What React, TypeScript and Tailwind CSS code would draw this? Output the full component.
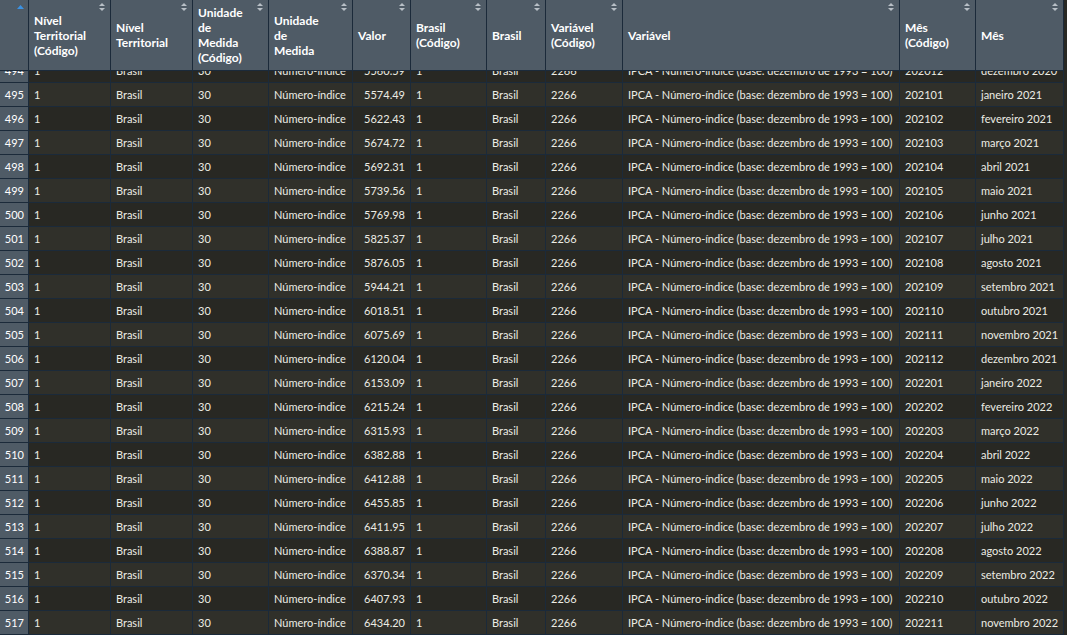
import React from "react"

// Column widths include the 1px right border
const cols =
  "grid grid-cols-[29px_82px_82px_76px_84px_58px_76px_59px_77px_277px_76px_88px]"

const headers: { lines: string[] }[] = [
  { lines: ["Nível", "Territorial", "(Código)"] },
  { lines: ["Nível", "Territorial"] },
  { lines: ["Unidade", "de", "Medida", "(Código)"] },
  { lines: ["Unidade", "de", "Medida"] },
  { lines: ["Valor"] },
  { lines: ["Brasil", "(Código)"] },
  { lines: ["Brasil"] },
  { lines: ["Variável", "(Código)"] },
  { lines: ["Variável"] },
  { lines: ["Mês", "(Código)"] },
  { lines: ["Mês"] },
]

const meses = [
  "janeiro",
  "fevereiro",
  "março",
  "abril",
  "maio",
  "junho",
  "julho",
  "agosto",
  "setembro",
  "outubro",
  "novembro",
  "dezembro",
]

const valores = [
  "5560.59", "5574.49", "5622.43", "5674.72", "5692.31", "5739.56",
  "5769.98", "5825.37", "5876.05", "5944.21", "6018.51", "6075.69",
  "6120.04", "6153.09", "6215.24", "6315.93", "6382.88", "6412.88",
  "6455.85", "6411.95", "6388.87", "6370.34", "6407.93", "6434.20",
]

const rows = valores.map((valor, i) => {
  const m = (11 + i) % 12
  const ano = 2020 + Math.floor((11 + i) / 12)
  return {
    n: 494 + i,
    valor,
    codigo: `${ano}${String(m + 1).padStart(2, "0")}`,
    mes: `${meses[m]} ${ano}`,
  }
})

function SortBoth() {
  return (
    <svg width="6" height="9" viewBox="0 0 6 9" className="absolute right-[5px] top-[3px]">
      <path d="M3 0 L6 3 L0 3 Z" fill="#b8bfc6" />
      <path d="M0 5 L6 5 L3 8 Z" fill="#b8bfc6" />
    </svg>
  )
}

const cell = "border-r border-b border-[#1b2a3a] h-6 px-[5px] leading-[23px] whitespace-nowrap overflow-hidden"

export default function App() {
  return (
    <div
      className="h-[635px] w-[1067px] overflow-hidden bg-[#282823] text-[11px] text-[#ecece4]"
      style={{ fontFamily: "Lato, 'Noto Sans', sans-serif" }}
    >
      {/* Header */}
      <div className={`${cols} relative z-10 h-[71px] w-[1064px] bg-[#4f5b66] text-[12px] font-bold text-white`}>
        <div className="relative border-r border-b border-[#1b2a3a]">
          <svg width="7" height="4" viewBox="0 0 7 4" className="absolute left-[17px] top-[5px]">
            <path d="M3.5 0 L7 4 L0 4 Z" fill="#3b92e3" />
          </svg>
        </div>
        {headers.map((h, i) => (
          <div
            key={i}
            className="relative flex items-center border-r border-b border-[#1b2a3a] px-[5px] leading-[15px]"
          >
            <div>
              {h.lines.map((l) => (
                <div key={l}>{l}</div>
              ))}
            </div>
            <SortBoth />
          </div>
        ))}
      </div>

      {/* Body */}
      <div className="-mt-3 w-[1064px]">
        {rows.map((r) => (
          <div
            key={r.n}
            className={`${cols} ${r.n % 2 === 1 ? "bg-[#30302a]" : "bg-[#282823]"}`}
          >
            <div className={`${cell} bg-[#4f5b66] pl-0 pr-[4px] text-right text-white`}>{r.n}</div>
            <div className={cell}>1</div>
            <div className={cell}>Brasil</div>
            <div className={cell}>30</div>
            <div className={cell}>Número-índice</div>
            <div className={`${cell} text-right`}>{r.valor}</div>
            <div className={cell}>1</div>
            <div className={cell}>Brasil</div>
            <div className={cell}>2266</div>
            <div className={cell}>IPCA - Número-índice (base: dezembro de 1993 = 100)</div>
            <div className={cell}>{r.codigo}</div>
            <div className={cell}>{r.mes}</div>
          </div>
        ))}
      </div>
    </div>
  )
}
